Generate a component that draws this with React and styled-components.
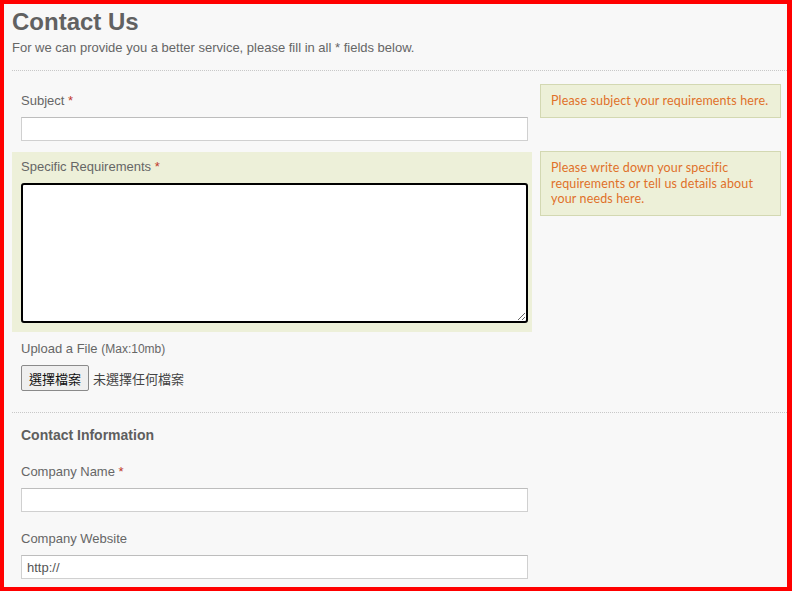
import React from 'react';
import styled, { createGlobalStyle } from 'styled-components';

const GlobalStyle = createGlobalStyle`
  html, body {
    margin: 0;
    padding: 0;
    background: #ff0000;
  }
  * { box-sizing: border-box; }
`;

const Frame = styled.div`
  width: 792px;
  height: 591px;
  border: 4px solid #ff0000;
  border-right-width: 5px;
  background: #f8f8f8;
  overflow: hidden;
  padding-left: 8px;
  font-family: 'Liberation Sans', Arial, sans-serif;
  color: #666;
`;

const Title = styled.h1`
  margin: 3px 0 0;
  font-size: 24px;
  line-height: 30px;
  font-weight: bold;
  color: #616161;
`;

const Intro = styled.p`
  margin: 2px 0 0;
  font-size: 13px;
  line-height: 18px;
  color: #666;
`;

const Divider = styled.hr`
  margin: ${p => p.$top || 13}px 0 0;
  border: 0;
  border-top: 1px dotted #c8c8c8;
  height: 0;
`;

const Section = styled.div`
  display: grid;
  grid-template-columns: 520px 241px;
  column-gap: 8px;
  row-gap: ${p => p.$gap || 2}px;
  align-items: start;
  padding-top: ${p => p.$top || 0}px;
`;

const Field = styled.div`
  grid-column: 1;
  padding: 6px 4px 9px 9px;
  background: ${p => (p.$active ? '#edf0d9' : 'transparent')};
`;

const Label = styled.label`
  display: block;
  font-size: 13px;
  line-height: 18px;
  margin-bottom: 7px;
  color: #666;
`;

const Small = styled.span`
  font-size: 12px;
`;

const Req = styled.span`
  color: #c0392b;
`;

const Input = styled.input`
  display: block;
  width: 100%;
  height: 24px;
  border: 1px solid #d0d0d0;
  border-top-color: #bdbdbd;
  background: #fff;
  padding: 0 5px;
  font-family: 'Liberation Sans', Arial, sans-serif;
  font-size: 13px;
  color: #555;
  outline: none;
`;

const Area = styled.textarea`
  display: block;
  width: 100%;
  height: 140px;
  border: 2px solid #000;
  border-radius: 3px;
  background: #fff;
  resize: vertical;
  outline: none;
  font-family: 'Liberation Sans', Arial, sans-serif;
`;

const Hint = styled.div`
  grid-column: 2;
  margin-top: ${p => p.$shift || 0}px;
  background: #edf0d8;
  border: 1px solid #d3d8b2;
  padding: 8px 6px 8px 10px;
  font-family: Lato, 'Open Sans', sans-serif;
  font-size: 12.5px;
  letter-spacing: 0.15px;
  line-height: 15.5px;
  color: #e0702a;
`;

const FileRow = styled.div`
  display: flex;
  align-items: center;
  gap: 4px;
  margin-top: 3px;
  font-family: 'Liberation Sans', 'Noto Sans CJK TC', sans-serif;
  font-size: 13px;
  color: #444;
`;

const FileButton = styled.button`
  height: 26px;
  padding: 0 7px;
  border: 1px solid #8a8a8a;
  border-radius: 2px;
  background: #efefef;
  font-family: 'Noto Sans CJK TC', sans-serif;
  font-size: 13px;
  color: #111;
`;

const Heading = styled.h3`
  grid-column: 1;
  margin: 0 0 10px;
  padding-left: 9px;
  font-size: 14px;
  line-height: 18px;
  font-weight: bold;
  color: #5e5e5e;
`;

export default function App() {
  return (
    <>
      <GlobalStyle />
      <Frame>
        <Title>Contact Us</Title>
        <Intro>For we can provide you a better service, please fill in all * fields below.</Intro>
        <Divider />

        <Section $top={15}>
          <Field>
            <Label>Subject <Req>*</Req></Label>
            <Input type="text" />
          </Field>
          <Hint $shift={-2}>Please subject your requirements here.</Hint>

          <Field $active>
            <Label>Specific Requirements <Req>*</Req></Label>
            <Area />
          </Field>
          <Hint $shift={-1}>
            Please write down your specific requirements or tell us details about your needs here.
          </Hint>

          <Field>
            <Label>Upload a File <Small>(Max:10mb)</Small></Label>
            <FileRow>
              <FileButton type="button">選擇檔案</FileButton>
              <span>未選擇任何檔案</span>
            </FileRow>
          </Field>
        </Section>

        <Divider $top={12} />

        <Section $top={13} $gap={3}>
          <Heading>Contact Information</Heading>
          <Field>
            <Label>Company Name <Req>*</Req></Label>
            <Input type="text" />
          </Field>
          <Field>
            <Label>Company Website</Label>
            <Input type="text" defaultValue="http://" />
          </Field>
        </Section>
      </Frame>
    </>
  );
}
